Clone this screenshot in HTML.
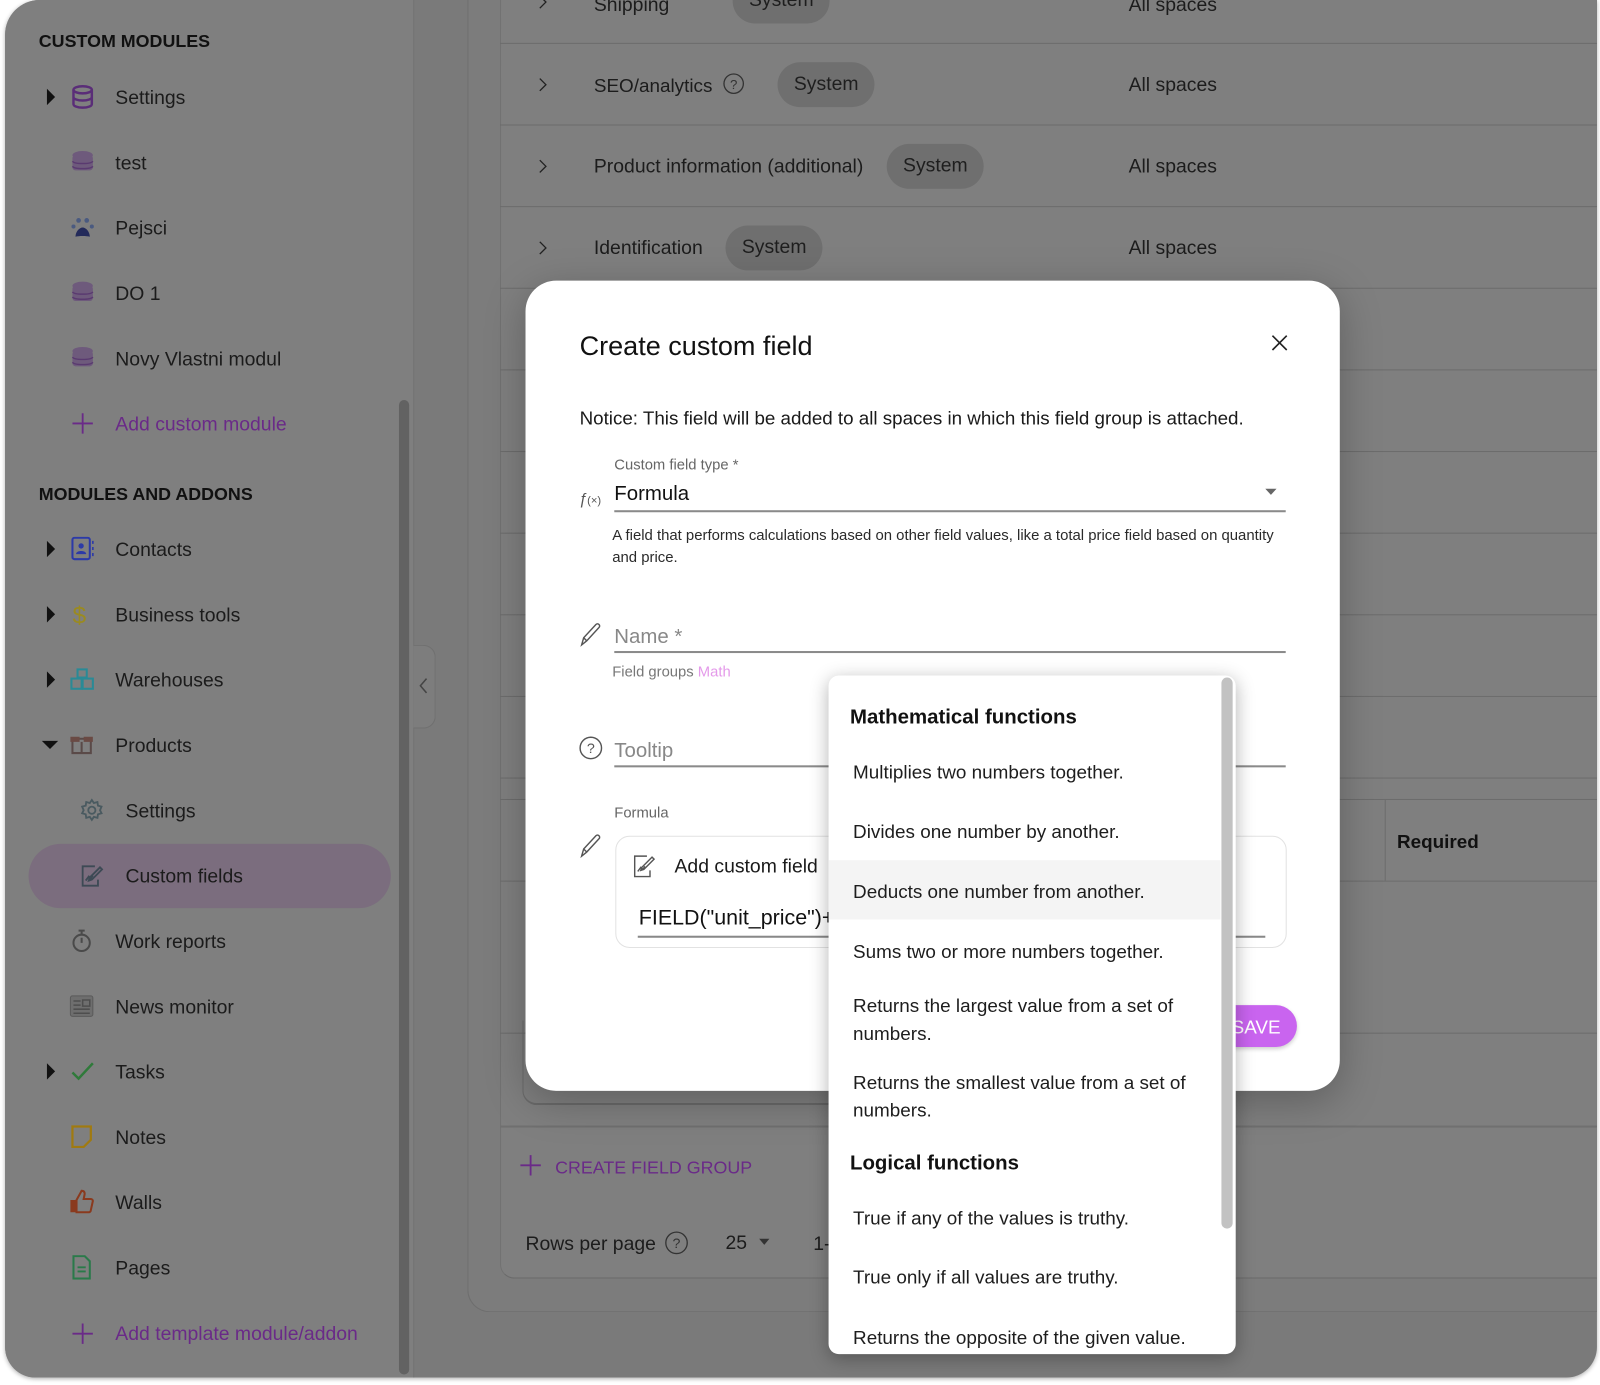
<!DOCTYPE html>
<html><head><meta charset="utf-8"><style>
*{margin:0;padding:0;box-sizing:border-box}
html,body{width:1600px;height:1385px;overflow:hidden;background:#fff;font-family:"Liberation Sans",sans-serif}
#w{position:absolute;left:0;top:0;width:1568px;height:1357px;transform:scale(1.020408);transform-origin:0 0}
.a{position:absolute}
.t{position:absolute;line-height:24px;white-space:nowrap;margin-top:1.5px}
#frame{left:5px;top:0;width:1560px;height:1350px;background:#7a7a7a;border-radius:34px 0 30px 30px;overflow:hidden;box-shadow:0 1px 4px rgba(0,0,0,.3)}
.side{color:#1b1b1b;font-size:19px}
.h{font-weight:bold;font-size:17.5px;color:#111}
.pur{color:#6a2a88}
.row{position:absolute;left:490px;width:1075px;height:1px;background:#6c6c6c}
.chip{position:absolute;height:44px;border-radius:22px;background:#6f6f6f;font-size:19px;color:#1e1e1e;line-height:44px;padding:0 16px;margin-top:1px}
.mt{color:#1c1c1c;font-size:19px}
.dd{position:absolute;left:836px;font-size:18.5px;color:#1d1d1d;line-height:27px;white-space:nowrap;margin-top:1.5px}
.dh{position:absolute;left:833px;font-size:20px;font-weight:bold;color:#111;line-height:24px;margin-top:1.5px}
</style></head><body><div id="w">
<div class="a" id="frame"></div>
<!-- sidebar -->
<div class="a" style="left:5px;top:0;width:400px;height:1350px;background:#7f7f7f;border-radius:34px 0 0 30px"></div>
<div class="a" style="left:405px;top:0;width:1px;height:1350px;background:#737373"></div>
<div class="a" style="left:391px;top:392px;width:10px;height:955px;border-radius:5px;background:#626262"></div>
<div class="a" style="left:405px;top:632px;width:22px;height:82px;border-radius:0 12px 12px 0;background:#7d7d7d;border:1px solid #707070;border-left:none"></div>
<svg class="a" style="left:409px;top:663px" width="12" height="18"><path d="M9 2 L3 9 L9 16" fill="none" stroke="#444" stroke-width="1.5"/></svg>

<div class="t h" style="left:38px;top:26px">CUSTOM MODULES</div>
<div class="t h" style="left:38px;top:470px">MODULES AND ADDONS</div>

<svg class="a" style="left:44px;top:86px" width="12" height="18"><path d="M2 1 L10 9 L2 17Z" fill="#111"/></svg>
<svg class="a" style="left:44px;top:529px" width="12" height="18"><path d="M2 1 L10 9 L2 17Z" fill="#111"/></svg>
<svg class="a" style="left:44px;top:593px" width="12" height="18"><path d="M2 1 L10 9 L2 17Z" fill="#111"/></svg>
<svg class="a" style="left:44px;top:657px" width="12" height="18"><path d="M2 1 L10 9 L2 17Z" fill="#111"/></svg>
<svg class="a" style="left:40px;top:724px" width="18" height="12"><path d="M1 2 L17 2 L9 10Z" fill="#111"/></svg>
<svg class="a" style="left:44px;top:1041px" width="12" height="18"><path d="M2 1 L10 9 L2 17Z" fill="#111"/></svg>

<svg class="a" style="left:69px;top:83px" width="24" height="24"><g fill="none" stroke="#5a2d78" stroke-width="2.4"><ellipse cx="12" cy="5" rx="9" ry="3.5"/><path d="M3 5v14c0 2 4 3.5 9 3.5s9-1.5 9-3.5V5M3 12c0 2 4 3.5 9 3.5s9-1.5 9-3.5"/></g></svg>
<svg class="a" style="left:69px;top:147px" width="24" height="24"><g fill="#6e5a7c"><ellipse cx="12" cy="5" rx="10" ry="4"/><rect x="2" y="5" width="20" height="15" rx="3"/></g><path d="M2 11c2 3 18 3 20 0M2 16c2 3 18 3 20 0" stroke="#5a3a70" fill="none" stroke-width="1.4"/></svg>
<svg class="a" style="left:69px;top:211px" width="24" height="24"><g fill="#232a5a"><path d="M5 21c0-5 4-9 7-9s7 4 7 9c-3-1-11-1-14 0z"/></g><g fill="#4a5a80"><circle cx="8" cy="5" r="2.3"/><circle cx="16" cy="5" r="2.3"/><circle cx="3" cy="11" r="2"/><circle cx="21" cy="11" r="2"/></g></svg>
<svg class="a" style="left:69px;top:275px" width="24" height="24"><g fill="#6e5a7c"><ellipse cx="12" cy="5" rx="10" ry="4"/><rect x="2" y="5" width="20" height="15" rx="3"/></g><path d="M2 11c2 3 18 3 20 0M2 16c2 3 18 3 20 0" stroke="#5a3a70" fill="none" stroke-width="1.4"/></svg>
<svg class="a" style="left:69px;top:339px" width="24" height="24"><g fill="#6e5a7c"><ellipse cx="12" cy="5" rx="10" ry="4"/><rect x="2" y="5" width="20" height="15" rx="3"/></g><path d="M2 11c2 3 18 3 20 0M2 16c2 3 18 3 20 0" stroke="#5a3a70" fill="none" stroke-width="1.4"/></svg>
<svg class="a" style="left:70px;top:404px" width="22" height="22"><path d="M11 1v20M1 11h20" stroke="#6a2a88" stroke-width="1.8"/></svg>
<svg class="a" style="left:69px;top:526px" width="24" height="24"><rect x="2" y="1" width="17" height="21" rx="2" fill="none" stroke="#2c3aa8" stroke-width="2"/><circle cx="10.5" cy="9" r="2.6" fill="#2c3aa8"/><path d="M5.5 17c0-4 10-4 10 0z" fill="#2c3aa8"/><path d="M22 4v3M22 10v3M22 16v3" stroke="#2c3aa8" stroke-width="1.6"/></svg>
<div class="t" style="left:71px;top:590px;font-size:24px;color:#9a8a20">$</div>
<svg class="a" style="left:68px;top:654px" width="26" height="24"><g fill="none" stroke="#2a8a96" stroke-width="2"><rect x="8" y="2" width="9" height="8"/><rect x="2" y="11" width="10" height="10"/><rect x="13" y="11" width="10" height="10"/></g></svg>
<svg class="a" style="left:68px;top:719px" width="24" height="22"><path d="M3 5h18v14H3z" fill="none" stroke="#5a4a48" stroke-width="2"/><path d="M1 3h9v5H1zM14 3h9v5h-9z" fill="#6a4a44"/><path d="M12 8v11" stroke="#5a4a48" stroke-width="2"/></svg>
<svg class="a" style="left:78px;top:782px" width="24" height="24"><g fill="none" stroke="#4a5a60" stroke-width="1.8"><circle cx="12" cy="12" r="3.5"/><path d="M12 2l2 3 3.5-1 .5 3.5 3.5 1-1.5 3.5 1.5 3-3.5 1-.5 3.5-3.5-1-2 3-2-3-3.5 1-.5-3.5-3.5-1 1.5-3-1.5-3.5 3.5-1 .5-3.5 3.5 1z"/></g></svg>
<div class="a" style="left:28px;top:827px;width:355px;height:63px;border-radius:32px;background:#7b6d7e"></div>
<svg class="a" style="left:78px;top:846px" width="26" height="24"><g fill="none" stroke="#3d4a55" stroke-width="1.8"><path d="M15 3H3v19h15v-6"/><path d="M12 16l10-10-2-2-10 10-1 3z"/><path d="M6 17l3-4 2 2 2-3"/></g></svg>
<svg class="a" style="left:69px;top:910px" width="22" height="24"><g fill="none" stroke="#4a4a4a" stroke-width="2"><circle cx="11" cy="14" r="8"/><path d="M11 14V9M8 2h6M11 2v4"/></g></svg>
<svg class="a" style="left:68px;top:975px" width="24" height="22"><rect x="1" y="1" width="22" height="20" rx="2" fill="#6e6e6e" stroke="#5a5a5a"/><path d="M4 6h7M4 10h7M4 14h16M4 18h16M13 5h7v6h-7z" stroke="#4e4e4e" stroke-width="1.5" fill="none"/></svg>
<svg class="a" style="left:69px;top:1039px" width="24" height="22"><path d="M2 12l6 6L22 3" fill="none" stroke="#2f7a3a" stroke-width="2.4"/></svg>
<svg class="a" style="left:69px;top:1102px" width="22" height="24"><path d="M2 2h18v13l-7 7H2z" fill="none" stroke="#a07a10" stroke-width="2.2"/></svg>
<svg class="a" style="left:67px;top:1165px" width="26" height="26"><path d="M2 11h5v12H2z" fill="#8a3a1e"/><path d="M8 11l5-9c2 0 3 1 3 3l-1 5h7c1 0 2 1 2 2l-2 9c0 1-1 2-2 2H8z" fill="none" stroke="#8a3a1e" stroke-width="2"/></svg>
<svg class="a" style="left:70px;top:1230px" width="20" height="24"><path d="M2 1h11l5 5v17H2z" fill="none" stroke="#2a7a4a" stroke-width="2"/><path d="M6 12h8M6 16h8" stroke="#2a7a4a" stroke-width="1.8"/></svg>
<svg class="a" style="left:70px;top:1296px" width="22" height="22"><path d="M11 1v20M1 11h20" stroke="#6a2a88" stroke-width="1.8"/></svg>

<div class="t side" style="left:113px;top:83px">Settings</div>
<div class="t side" style="left:113px;top:147px">test</div>
<div class="t side" style="left:113px;top:211px">Pejsci</div>
<div class="t side" style="left:113px;top:275px">DO 1</div>
<div class="t side" style="left:113px;top:339px">Novy Vlastni modul</div>
<div class="t side pur" style="left:113px;top:403px">Add custom module</div>
<div class="t side" style="left:113px;top:526px">Contacts</div>
<div class="t side" style="left:113px;top:590px">Business tools</div>
<div class="t side" style="left:113px;top:654px">Warehouses</div>
<div class="t side" style="left:113px;top:718px">Products</div>
<div class="t side" style="left:123px;top:782px">Settings</div>
<div class="t side" style="left:123px;top:846px">Custom fields</div>
<div class="t side" style="left:113px;top:910px">Work reports</div>
<div class="t side" style="left:113px;top:974px">News monitor</div>
<div class="t side" style="left:113px;top:1038px">Tasks</div>
<div class="t side" style="left:113px;top:1102px">Notes</div>
<div class="t side" style="left:113px;top:1166px">Walls</div>
<div class="t side" style="left:113px;top:1230px">Pages</div>
<div class="t side pur" style="left:113px;top:1294px">Add template module/addon</div>

<!-- main -->
<div class="a" style="left:458px;top:0;width:1107px;height:1286px;background:#7c7c7c;border-left:1px solid #6e6e6e;border-bottom:1px solid #6e6e6e;border-radius:0 0 0 22px"></div>
<div class="a" style="left:490px;top:0;width:1075px;height:1253px;background:#7f7f7f;border-left:1px solid #727272;border-bottom:1px solid #6a6a6a;border-radius:0 0 0 14px"></div>
<div class="row" style="top:42px"></div><div class="row" style="top:122px"></div><div class="row" style="top:202px"></div><div class="row" style="top:282px"></div><div class="row" style="top:362px"></div><div class="row" style="top:442px"></div><div class="row" style="top:522px"></div><div class="row" style="top:602px"></div><div class="row" style="top:682px"></div><div class="row" style="top:762px"></div><div class="row" style="top:783px"></div><div class="row" style="top:863px"></div><div class="row" style="top:1012px"></div>
<div class="a" style="left:512px;top:1000px;width:320px;height:83px;border-left:1px solid #6a6a6a;border-bottom:2px solid #6a6a6a;border-radius:0 0 0 14px"></div>
<div class="row" style="top:1103px;height:2px;background:#707070"></div>
<div class="a" style="left:1357px;top:783px;width:1px;height:80px;background:#6c6c6c"></div>
<div class="t" style="left:1369px;top:811px;font-size:18.5px;font-weight:bold;color:#111">Required</div>

<svg class="a" style="left:526px;top:-6px" width="12" height="16"><path d="M3 2l6 6-6 6" fill="none" stroke="#222" stroke-width="1.3"/></svg>
<div class="t mt" style="left:582px;top:-8px">Shipping</div>
<div class="chip" style="left:718px;top:-22px">System</div>
<div class="t mt" style="left:1106px;top:-8px">All spaces</div>

<svg class="a" style="left:526px;top:75px" width="12" height="16"><path d="M3 2l6 6-6 6" fill="none" stroke="#222" stroke-width="1.3"/></svg>
<div class="t mt" style="left:582px;top:70px;font-size:18.5px">SEO/analytics</div>
<svg class="a" style="left:708px;top:71px" width="22" height="22"><circle cx="11" cy="11" r="9.5" fill="none" stroke="#333" stroke-width="1.3"/><text x="11" y="16" font-size="13" text-anchor="middle" fill="#333" font-family="Liberation Sans">?</text></svg>
<div class="chip" style="left:762px;top:60px">System</div>
<div class="t mt" style="left:1106px;top:70px">All spaces</div>

<svg class="a" style="left:526px;top:155px" width="12" height="16"><path d="M3 2l6 6-6 6" fill="none" stroke="#222" stroke-width="1.3"/></svg>
<div class="t mt" style="left:582px;top:150px">Product information (additional)</div>
<div class="chip" style="left:869px;top:140px">System</div>
<div class="t mt" style="left:1106px;top:150px">All spaces</div>

<svg class="a" style="left:526px;top:235px" width="12" height="16"><path d="M3 2l6 6-6 6" fill="none" stroke="#222" stroke-width="1.3"/></svg>
<div class="t mt" style="left:582px;top:230px">Identification</div>
<div class="chip" style="left:711px;top:220px">System</div>
<div class="t mt" style="left:1106px;top:230px">All spaces</div>

<svg class="a" style="left:509px;top:1131px" width="22" height="22"><path d="M11 1v20M1 11h20" stroke="#6a2a88" stroke-width="1.8"/></svg>
<div class="t pur" style="left:544px;top:1130px;font-size:17.5px">CREATE FIELD GROUP</div>
<div class="t mt" style="left:515px;top:1206px;font-size:19px">Rows per page</div>
<svg class="a" style="left:651px;top:1206px" width="24" height="24"><circle cx="12" cy="12" r="10.5" fill="none" stroke="#333" stroke-width="1.3"/><text x="12" y="17" font-size="14" text-anchor="middle" fill="#333" font-family="Liberation Sans">?</text></svg>
<div class="t mt" style="left:711px;top:1205px">25</div>
<svg class="a" style="left:743px;top:1213px" width="12" height="8"><path d="M1 1h10L6 7z" fill="#333"/></svg>
<div class="t mt" style="left:797px;top:1206px">1-</div>

<!-- modal -->
<div class="a" style="left:515px;top:275px;width:798px;height:794px;background:#fff;border-radius:30px;box-shadow:0 10px 40px rgba(0,0,0,.25)"></div>
<div class="t" style="left:568px;top:322px;font-size:26.5px;line-height:30px;color:#111;font-weight:500">Create custom field</div>
<svg class="a" style="left:1245px;top:327px" width="18" height="18"><path d="M2 2l14 14M16 2L2 16" stroke="#222" stroke-width="1.6"/></svg>
<div class="t" style="left:568px;top:396px;font-size:18.4px;color:#1a1a1a">Notice: This field will be added to all spaces in which this field group is attached.</div>
<div class="t" style="left:602px;top:442px;font-size:14.5px;color:#666">Custom field type *</div>
<div class="t" style="left:567px;top:476px;font-size:15px;color:#555;font-style:italic">ƒ<span style="font-size:11px;font-style:normal">(×)</span></div>
<div class="t" style="left:602px;top:470px;font-size:20px;color:#111">Formula</div>
<svg class="a" style="left:1239px;top:478px" width="13" height="8"><path d="M1 1h11L6.5 7z" fill="#666"/></svg>
<div class="a" style="left:602px;top:500px;width:658px;height:1.5px;background:#8a8a8a"></div>
<div class="a" style="left:600px;top:514px;width:655px;font-size:14.6px;line-height:22px;color:#2a2a2a">A field that performs calculations based on other field values, like a total price field based on quantity and price.</div>
<svg class="a" style="left:566px;top:608px" width="26" height="26"><path d="M4 24l2-7L18 4c2-2 5 1 3 3L9 20z M6 17l3 3" fill="none" stroke="#555" stroke-width="1.4"/></svg>
<div class="t" style="left:602px;top:610px;font-size:20px;color:#888">Name *</div>
<div class="a" style="left:602px;top:638px;width:658px;height:1.5px;background:#8a8a8a"></div>
<div class="t" style="left:600px;top:645px;font-size:14.5px;color:#777">Field groups <span style="color:#e49aea">Math</span></div>
<svg class="a" style="left:567px;top:721px" width="24" height="24"><circle cx="12" cy="12" r="10.5" fill="none" stroke="#555" stroke-width="1.4"/><text x="12" y="17" font-size="14" text-anchor="middle" fill="#555" font-family="Liberation Sans">?</text></svg>
<div class="t" style="left:602px;top:722px;font-size:20px;color:#888">Tooltip</div>
<div class="a" style="left:602px;top:750px;width:658px;height:1.5px;background:#8a8a8a"></div>
<div class="t" style="left:602px;top:783px;font-size:14.5px;color:#666">Formula</div>
<svg class="a" style="left:566px;top:815px" width="26" height="26"><path d="M4 24l2-7L18 4c2-2 5 1 3 3L9 20z M6 17l3 3" fill="none" stroke="#555" stroke-width="1.4"/></svg>
<div class="a" style="left:603px;top:819px;width:658px;height:110px;border:1px solid #e2e2e2;border-radius:14px"></div>
<svg class="a" style="left:619px;top:836px" width="26" height="26"><g fill="none" stroke="#555" stroke-width="1.4"><path d="M15 3H3v20h15v-6"/><path d="M12 16l10-10-2-2-10 10-1 3z"/><path d="M6 18l3-4 2 2 2-3"/></g></svg>
<div class="t" style="left:661px;top:836px;font-size:19px;color:#1a1a1a">Add custom field</div>
<div class="t" style="left:626px;top:886px;font-size:21px;color:#111">FIELD("unit_price")+</div>
<div class="a" style="left:625px;top:917px;width:615px;height:1.5px;background:#888"></div>
<div class="a" style="left:1180px;top:985px;width:91px;height:41px;border-radius:21px;background:#c964ef;box-shadow:0 2px 4px rgba(0,0,0,.2)"></div>
<div class="t" style="left:1207px;top:993px;font-size:18.5px;color:#fff;font-weight:500">SAVE</div>

<!-- dropdown -->
<div class="a" style="left:812px;top:662px;width:399px;height:665px;background:#fff;border-radius:10px;box-shadow:0 4px 18px rgba(0,0,0,.3);overflow:hidden">
<div class="a" style="left:0;top:181px;width:384px;height:58px;background:#f4f4f4"></div>
<div class="a" style="left:385px;top:2px;width:11px;height:540px;border-radius:6px;background:#c2c2c2"></div>
</div>
<div class="dh" style="top:689px">Mathematical functions</div>
<div class="dd" style="top:741px">Multiplies two numbers together.</div>
<div class="dd" style="top:799px">Divides one number by another.</div>
<div class="dd" style="top:858px">Deducts one number from another.</div>
<div class="dd" style="top:917px">Sums two or more numbers together.</div>
<div class="dd" style="top:970px">Returns the largest value from a set of<br>numbers.</div>
<div class="dd" style="top:1045px">Returns the smallest value from a set of<br>numbers.</div>
<div class="dh" style="top:1126px">Logical functions</div>
<div class="dd" style="top:1178px">True if any of the values is truthy.</div>
<div class="dd" style="top:1236px">True only if all values are truthy.</div>
<div class="dd" style="top:1295px">Returns the opposite of the given value.</div>
</div></body></html>
